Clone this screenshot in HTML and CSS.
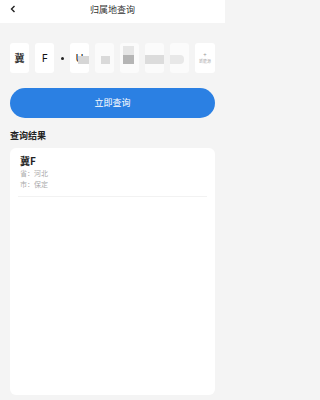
FILE: index.html
```html
<!DOCTYPE html>
<html lang="zh">
<head>
<meta charset="utf-8">
<link rel="stylesheet" href="styles.css">
</head>
<body>
<div class="page">
  <header class="topbar">
    <svg class="back" width="6" height="8" viewBox="0 0 6 8"><path d="M4.5 1 L1.5 4 L4.5 7" fill="none" stroke="#222" stroke-width="1.4"/></svg>
    <div class="title">归属地查询</div>
  </header>

  <div class="plate">
    <div class="cell"><span class="ch cjk">冀</span></div>
    <div class="cell"><span class="ch">F</span></div>
    <div class="dot"></div>
    <div class="cell"><span class="ch">U</span><i class="blk b1"></i></div>
    <div class="cell ghost"><i class="blk b2"></i></div>
    <div class="cell ghost"><i class="blk b3"></i><i class="blk b4"></i></div>
    <div class="cell ghost"><i class="blk b5"></i></div>
    <div class="cell ghost"><i class="blk b6"></i></div>
    <div class="cell newe"><span class="plus">+</span><span class="ne">新能源</span></div>
  </div>

  <button class="query">立即查询</button>

  <div class="sec">查询结果</div>

  <div class="card">
    <div class="res">
      <div class="code">冀F</div>
      <div class="line">省：河北</div>
      <div class="line">市：保定</div>
    </div>
    <div class="divider"></div>
  </div>
</div>
</body>
</html>
```

FILE: styles.css
```css
html, body {
  margin: 0;
  padding: 0;
}
body {
  background: #f4f4f4;
  font-family: "Noto Sans CJK SC", "Noto Sans", sans-serif;
  color: #222;
}
.page {
  width: 225px;
  height: 400px;
  display: flex;
  flex-direction: column;
  overflow: hidden;
}
.topbar {
  height: 23px;
  background: #fff;
  position: relative;
  display: flex;
  align-items: center;
  justify-content: center;
}
.back {
  position: absolute;
  left: 10px;
  top: 5px;
}
.title {
  font-size: 9px;
  line-height: 12px;
  margin-top: -4px;
  color: #333;
}
.plate {
  margin: 20px 10px 0;
  height: 30px;
  display: flex;
  gap: 6px;
}
.cell {
  width: 19px;
  height: 30px;
  background: #fff;
  border-radius: 3px;
  flex: none;
  display: flex;
  align-items: center;
  justify-content: center;
  position: relative;
  overflow: hidden;
}
.ch {
  font-family: "Noto Sans", "Noto Sans CJK SC", sans-serif;
  font-size: 11px;
  line-height: 12px;
  color: #111;
}
.ch.cjk {
  font-family: "Noto Sans CJK SC", sans-serif;
  font-size: 10px;
  font-weight: 700;
  color: #333;
}
.dot {
  width: 4px;
  display: flex;
  align-items: center;
  justify-content: center;
}
.dot::before {
  content: "";
  width: 3px;
  height: 3px;
  border-radius: 50%;
  background: #222;
}
.ghost {
  background: #fbfbfb;
}
.blk {
  position: absolute;
  display: block;
  filter: blur(0.6px);
}
.b1 { left: 8px; top: 13px; width: 11px; height: 8px; background: #d6d6d6; }
.b2 { left: 6px; top: 13px; width: 9px; height: 8px; background: #dadada; }
.b3 { left: 3px; top: 3px; width: 11px; height: 9px; background: #e6e6e6; }
.b4 { left: 3px; top: 12px; width: 11px; height: 9px; background: #b5b5b5; }
.b5 { left: 0; top: 12px; width: 19px; height: 9px; background: #dcdcdc; }
.b6 { left: 0; top: 12px; width: 14px; height: 9px; background: #e8e8e8; border-radius: 0 4px 4px 0; }
.newe {
  width: 20px;
  flex-direction: column;
}
.plus {
  font-size: 6px;
  line-height: 6px;
  color: #999;
}
.ne {
  font-size: 4px;
  line-height: 6px;
  color: #aaa;
  white-space: nowrap;
}
.query {
  margin: 15px 10px 0;
  height: 30px;
  border: none;
  border-radius: 15px;
  background: #2b80e3;
  color: #fff;
  font-family: "Noto Sans CJK SC", sans-serif;
  font-size: 9px;
  line-height: 12px;
  padding: 0;
}
.sec {
  margin: 11px 10px 0;
  font-size: 9px;
  line-height: 13px;
  font-weight: 700;
  color: #222;
}
.card {
  margin: 6px 10px 0;
  height: 247px;
  background: #fff;
  border-radius: 6px;
  flex: none;
}
.res {
  padding: 6px 10px 0;
}
.code {
  font-size: 10px;
  line-height: 14px;
  font-weight: 700;
  color: #222;
}
.line {
  font-size: 7px;
  line-height: 11px;
  color: #aaa;
}
.divider {
  margin: 6px 8px 0;
  height: 1px;
  background: #f2f2f2;
}
```
